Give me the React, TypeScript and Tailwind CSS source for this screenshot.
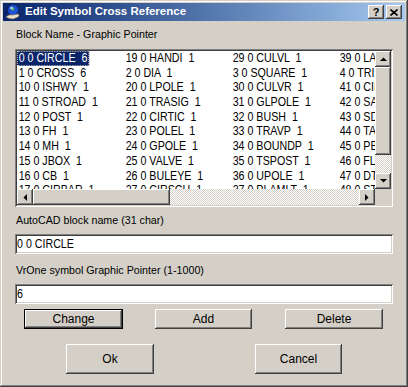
import React from "react";

const raised =
  "shadow-[inset_-1px_-1px_#404040,inset_1px_1px_#ffffff,inset_-2px_-2px_#808080,inset_2px_2px_#d4d0c8]";
const sunken =
  "shadow-[inset_1px_1px_#808080,inset_-1px_-1px_#ffffff,inset_2px_2px_#404040,inset_-2px_-2px_#d4d0c8]";
const checker =
  "bg-[repeating-conic-gradient(#d4d0c8_0_25%,#ffffff_0_50%)] bg-[length:2px_2px]";

const cols: string[][] = [
  ["0 0 CIRCLE  6", "1 0 CROSS  6", "10 0 ISHWY  1", "11 0 STROAD  1", "12 0 POST  1", "13 0 FH  1", "14 0 MH  1", "15 0 JBOX  1", "16 0 CB  1", "17 0 CIRBAR  1"],
  ["19 0 HANDI  1", "2 0 DIA  1", "20 0 LPOLE  1", "21 0 TRASIG  1", "22 0 CIRTIC  1", "23 0 POLEL  1", "24 0 GPOLE  1", "25 0 VALVE  1", "26 0 BULEYE  1", "27 0 CIRSCH  1"],
  ["29 0 CULVL  1", "3 0 SQUARE  1", "30 0 CULVR  1", "31 0 GLPOLE  1", "32 0 BUSH  1", "33 0 TRAVP  1", "34 0 BOUNDP  1", "35 0 TSPOST  1", "36 0 UPOLE  1", "37 0 PLAMLT  1"],
  ["39 0 LAMP  1", "4 0 TRI  1", "41 0 CIIRC  1", "42 0 SAN  1", "43 0 SDMH  1", "44 0 TAP  1", "45 0 PEDS  1", "46 0 FLAG  1", "47 0 DTREE  1", "48 0 STUMP  1"],
];

function Arrow({ dir }: { dir: "up" | "down" | "left" | "right" }) {
  const pts: Record<string, string> = {
    up: "0,4 7,4 3.5,0.5",
    down: "0,0 7,0 3.5,3.5",
    left: "4,0 4,7 0.5,3.5",
    right: "0,0 0,7 3.5,3.5",
  };
  const vertical = dir === "up" || dir === "down";
  return (
    <svg width={vertical ? 7 : 4} height={vertical ? 4 : 7} viewBox={vertical ? "0 0 7 4" : "0 0 4 7"}>
      <polygon points={pts[dir]} fill="#000" />
    </svg>
  );
}

function ScrollBtn({ dir }: { dir: "up" | "down" | "left" | "right" }) {
  return (
    <div className={`w-[16px] h-[16px] shrink-0 bg-[#d4d0c8] flex items-center justify-center ${raised}`}>
      <Arrow dir={dir} />
    </div>
  );
}

function Button({ label, w, h, def, className = "" }: { label: string; w: string; h: string; def?: boolean; className?: string }) {
  return (
    <div className={`${w} ${h} ${className} ${def ? "border border-black" : ""} bg-[#d4d0c8]`}>
      <div className={`w-full h-full flex items-center justify-center ${raised} text-[12px]`}>{label}</div>
    </div>
  );
}

function TitleIcon() {
  return (
    <svg width="16" height="16" viewBox="0 0 16 16">
      <circle cx="8" cy="6" r="5" fill="#1f4fd6" />
      <path d="M5 4 Q7 2 9 4 Q10 6 8 7 Q6 6 5 4Z" fill="#4fb04a" />
      <circle cx="6.5" cy="4" r="1.3" fill="#bcd4ff" />
      <path d="M1 13 Q4 10 8 11 L13 10 Q15 11 13 13 L8 15 Q4 15 1 13Z" fill="#e8e0c8" stroke="#8a7a5a" strokeWidth="0.6" />
    </svg>
  );
}

const narrowText = "inline-block origin-left scale-x-[0.82] whitespace-pre";

export default function App() {
  return (
    <div
      className={`w-[408px] h-[387px] bg-[#d4d0c8] p-[3px] flex flex-col font-['Liberation_Sans',sans-serif] text-[11px] text-black shadow-[inset_-1px_-1px_#404040,inset_1px_1px_#d4d0c8,inset_-2px_-2px_#808080,inset_2px_2px_#ffffff]`}
    >
      {/* Title bar */}
      <div className="h-[18px] shrink-0 flex items-center bg-gradient-to-r from-[#0a246a] to-[#a6caf0] pl-[2px] pr-[3px]">
        <TitleIcon />
        <span className="ml-[4px] text-white font-bold text-[11.5px] leading-none">Edit Symbol Cross Reference</span>
        <div className="ml-auto flex gap-[2px]">
          <div className={`w-[16px] h-[14px] bg-[#d4d0c8] flex items-center justify-center font-bold text-[11px] leading-none ${raised}`}>?</div>
          <div className={`w-[16px] h-[14px] bg-[#d4d0c8] flex items-center justify-center ${raised}`}>
            <svg width="8" height="7" viewBox="0 0 8 7">
              <path d="M0.5 0.5 L7.5 6.5 M7.5 0.5 L0.5 6.5" stroke="#000" strokeWidth="1.6" />
            </svg>
          </div>
        </div>
      </div>

      {/* Content */}
      <div className="flex flex-col px-[12px]">
        <div className="mt-[7px] h-[13px] leading-[13px] pl-[1px] text-[10.7px]">Block Name - Graphic Pointer</div>

        {/* List box */}
        <div className={`mt-[8px] h-[158px] bg-white p-[2px] flex flex-col ${sunken}`}>
          <div className="flex h-[138px]">
            <div className="flex-1 flex overflow-hidden text-[13px]">
              {cols.map((col, ci) => (
                <div key={ci} className="w-[107px] shrink-0 flex flex-col">
                  {col.map((item, ri) => (
                    <div key={ri} className="h-[14.7px] shrink-0 leading-[14.7px] whitespace-pre overflow-hidden">
                      {ci === 0 && ri === 0 ? (
                        <span className={`${narrowText} bg-[#0a246a] text-white px-[2px] outline outline-1 outline-dotted outline-[#d4d0c8] -outline-offset-1`}>{item}</span>
                      ) : (
                        <span className={`${narrowText} px-[2px]`}>{item}</span>
                      )}
                    </div>
                  ))}
                </div>
              ))}
            </div>
            {/* vertical scrollbar */}
            <div className="w-[16px] flex flex-col">
              <ScrollBtn dir="up" />
              <div className={`h-[88px] bg-[#d4d0c8] ${raised}`} />
              <div className={`flex-1 ${checker}`} />
              <ScrollBtn dir="down" />
            </div>
          </div>
          {/* horizontal scrollbar */}
          <div className="flex h-[16px]">
            <ScrollBtn dir="left" />
            <div className={`w-[137px] h-[16px] bg-[#d4d0c8] ${raised}`} />
            <div className={`flex-1 ${checker}`} />
            <ScrollBtn dir="right" />
            <div className="w-[16px] bg-[#d4d0c8]" />
          </div>
        </div>

        <div className="mt-[7px] h-[13px] leading-[13px] pl-[1px] text-[10.7px]">AutoCAD block name (31 char)</div>
        <div className={`mt-[7px] h-[20px] bg-white flex items-center pl-[2px] text-[13px] ${sunken}`}>
          <span className={narrowText}>0 0 CIRCLE</span>
        </div>

        <div className="mt-[10px] h-[13px] leading-[13px] pl-[1px] text-[10.7px]">VrOne symbol Graphic Pointer (1-1000)</div>
        <div className={`mt-[7px] h-[20px] bg-white flex items-center pl-[2px] text-[13px] ${sunken}`}>
          <span className={narrowText}>6</span>
        </div>

        <div className="mt-[5px] flex">
          <Button label="Change" w="w-[99px]" h="h-[20px]" def className="ml-[9px]" />
          <Button label="Add" w="w-[97px]" h="h-[20px]" className="ml-[32px]" />
          <Button label="Delete" w="w-[98px]" h="h-[20px]" className="ml-[33px]" />
        </div>

        <div className="mt-[15px] flex">
          <Button label="Ok" w="w-[88px]" h="h-[30px]" className="ml-[51px]" />
          <Button label="Cancel" w="w-[87px]" h="h-[30px]" className="ml-[101px]" />
        </div>
      </div>
    </div>
  );
}
